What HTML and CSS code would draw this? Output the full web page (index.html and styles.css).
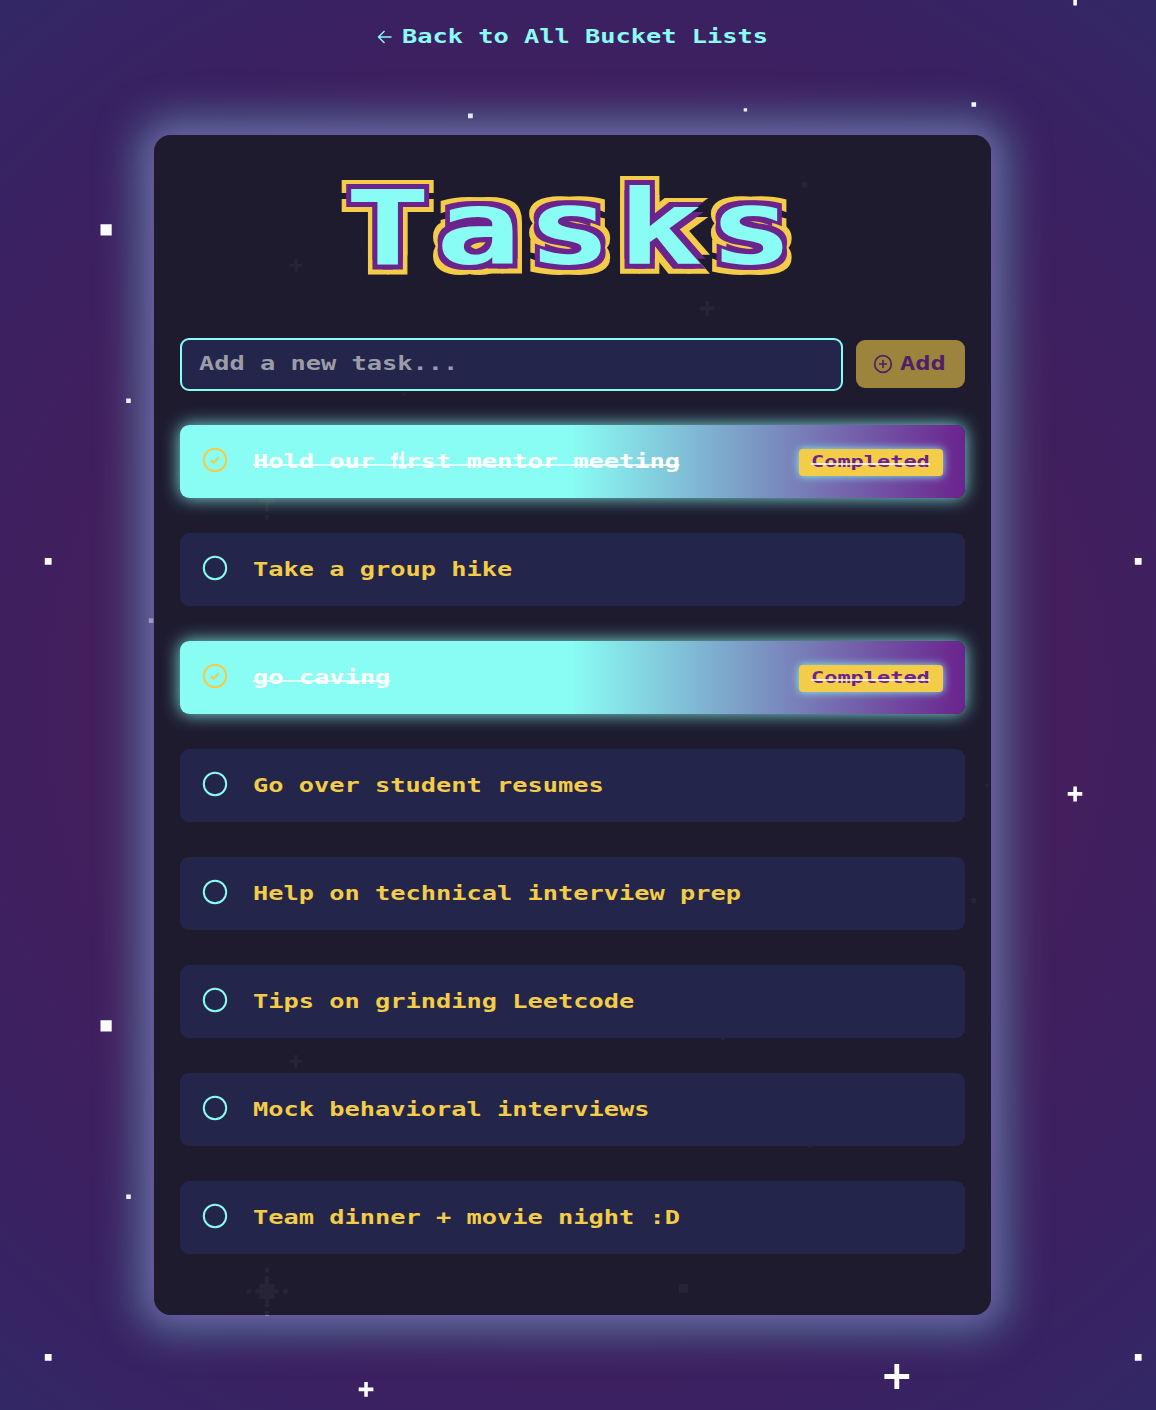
FILE: index.html
```html
<!DOCTYPE html>
<html lang="en">
<head>
<meta charset="utf-8">
<title>Tasks</title>
<link rel="stylesheet" href="styles.css">
</head>
<body>
<svg class="stars" width="1156" height="1410" aria-hidden="true">
  <defs>
    <pattern id="sky" width="1090" height="796" patternUnits="userSpaceOnUse">
      <path fill="#fff" d="M100.5 224.2h11.2v11.2h-11.2zM126.2 398.5h4.6v4.6h-4.6zM44.8 558h6.8v6.8h-6.8zM468 113.5h4.8v4.8H468zM743.7 108.2h3.4v3.4h-3.4zM971.5 102.2h4.6v4.6h-4.6zM801.7 182h5.4v5.4h-5.4zM402.5 392.8h3v3h-3zM985.5 784h3v3h-3zM721.5 241h3v3h-3zM808.5 349h3v3h-3zM679 488h8.7v8.7H679z"/>
      <path fill="#fff" fill-opacity=".65" d="M148.8 618.3h4.6v4.6h-4.6z"/>
      <path fill="#fff" d="M1073.3 786.5h3.6v5.6h5.4v3.6h-5.4v5.7h-3.6v-5.7h-5.6v-3.6h5.6zM1073.3-9.5h3.6v5.6h5.4v3.6h-5.4v5.7h-3.6v-5.7h-5.6v-3.6h5.6zM364.3 586h3.5v5.6h5.6v3.6h-5.6v5.6h-3.5v-5.6h-5.6v-3.6h5.6zM894.4 568h4.8v10h10v5h-10v10h-4.8v-10h-10v-5h10zM705.6 301h3.5v5.6h5.6v3.6h-5.6v5.6h-3.5v-5.6h-5.6v-3.6h5.6zM294.5 259h2.8v5h5v2.6h-5v5h-2.8v-5h-5V264h5z"/>
      <path fill="#fff" d="M259.5 488h15v15h-15zM265 480h4v31h-4zM255.500 493.500h23v4h-23zM265 472h4v4.500h-4zM265 515h4v4.500h-4zM247 493.500h4v4h-4zM283.500 493.500h4v4h-4z"/>
    </pattern>
  </defs>
  <rect width="1156" height="1410" fill="url(#sky)"/>
</svg>
<div class="page">
  <a class="back">
    <svg width="16" height="16" viewBox="0 0 16 16" fill="none" stroke="currentColor" stroke-width="1.4"><path d="M14.500 8H1.800M7.500 2L1.500 8l6 6"/></svg>
    <span class="wide">Back to All Bucket Lists</span>
  </a>
  <main class="card">
    <h1 class="title"><span>Tasks</span></h1>
    <form class="add-form">
      <div class="field"><input type="text" placeholder="Add a new task..."></div>
      <button type="button" class="add" disabled>
        <svg width="20" height="20" viewBox="0 0 20 20" fill="none" stroke="currentColor" stroke-width="1.7"><circle cx="10" cy="10" r="8.300"/><path d="M10 6v8M6 10h8"/></svg>
        <span class="wide">Add</span>
      </button>
    </form>
    <ul class="list">
      <li class="item done">
        <svg class="mark" viewBox="0 0 26 26"><circle cx="13" cy="13" r="11.200"/><path d="M9 13.200l2.700 2.600 5-5.300"/></svg>
        <span class="wide struck">Hold our <span class="fi">fi</span>rst mentor meeting</span><span class="badge"><span class="struck">Completed</span></span>
      </li>
      <li class="item"><svg class="mark" viewBox="0 0 26 26"><circle cx="13" cy="13" r="11.200"/></svg><span class="wide">Take a group hike</span></li>
      <li class="item done">
        <svg class="mark" viewBox="0 0 26 26"><circle cx="13" cy="13" r="11.200"/><path d="M9 13.200l2.700 2.600 5-5.300"/></svg>
        <span class="wide struck">go caving</span><span class="badge"><span class="struck">Completed</span></span>
      </li>
      <li class="item"><svg class="mark" viewBox="0 0 26 26"><circle cx="13" cy="13" r="11.200"/></svg><span class="wide">Go over student resumes</span></li>
      <li class="item"><svg class="mark" viewBox="0 0 26 26"><circle cx="13" cy="13" r="11.200"/></svg><span class="wide">Help on technical interview prep</span></li>
      <li class="item"><svg class="mark" viewBox="0 0 26 26"><circle cx="13" cy="13" r="11.200"/></svg><span class="wide">Tips on grinding Leetcode</span></li>
      <li class="item"><svg class="mark" viewBox="0 0 26 26"><circle cx="13" cy="13" r="11.200"/></svg><span class="wide">Mock behavioral interviews</span></li>
      <li class="item"><svg class="mark" viewBox="0 0 26 26"><circle cx="13" cy="13" r="11.200"/></svg><span class="wide">Team dinner + movie night :D</span></li>
    </ul>
  </main>
</div>
</body>
</html>
```
FILE: styles.css
```css
:root {
  --cyan: #89fcf3;
  --gold: #f3cc48;
  --purple: #6b238e;
}
* { box-sizing: border-box; }
body {
  margin: 0;
  height: 1410px;
  overflow: hidden;
  position: relative;
  background: radial-gradient(circle at 50% 50%, #431f5e 55%, #3a2162 80%, #332866 100%);
  font: bold 19px/24px "DejaVu Sans Mono", monospace;
}
.stars { position: absolute; top: 0; left: 0; }
.page { position: relative; padding: 24px 165px 0 154px; }
.wide {
  display: inline-block;
  white-space: pre;
  transform: scaleX(1.333);
  transform-origin: left center;
}
.back {
  display: flex;
  align-items: center;
  gap: 9px;
  width: 391px;
  height: 24px;
  margin: 0 0 87.300px 223px;
  color: var(--cyan);
}
.back svg { flex: none; position: relative; top: 1px; }
.card {
  height: 1179.500px;
  padding: 26px;
  border-radius: 17px;
  background: rgba(29, 27, 45, .96);
  box-shadow: 0 0 20px rgba(145, 60, 180, .55), 0 0 40px 16px rgba(110, 185, 205, .56);
}
.title {
  height: 154px;
  margin: 0 0 22.700px;
  padding-left: 164.500px;
  font-size: 103.500px;
  line-height: 134px;
  letter-spacing: 4px;
  color: var(--cyan);
}
.title span {
  display: inline-block;
  transform: scaleX(1.370);
  transform-origin: left center;
  text-shadow:
    -3.600px -5px var(--purple), 3.600px -5px var(--purple), -3.600px 5px var(--purple), 3.600px 5px var(--purple),
    -6.900px -9.500px var(--gold), 6.900px -9.500px var(--gold), -6.900px 9.500px var(--gold), 6.900px 9.500px var(--gold);
}
.add-form { display: flex; align-items: center; gap: 13px; margin-bottom: 33.900px; }
.field {
  width: 663px;
  height: 53px;
  padding-left: 17px;
  border: 2px solid var(--cyan);
  border-radius: 9px;
  background: #24254a;
  overflow: hidden;
}
.field input {
  width: 470px;
  height: 47px;
  padding: 0;
  border: 0;
  outline: 0;
  background: none;
  font: inherit;
  color: var(--gold);
  transform: scaleX(1.333);
  transform-origin: left center;
}
.field input::placeholder { color: #9a9da9; opacity: 1; }
.add {
  display: flex;
  align-items: center;
  gap: 7px;
  width: 109px;
  height: 48px;
  margin-top: -1px;
  padding: 0 0 1px 17px;
  border: 0;
  border-radius: 9px;
  background: #9c843d;
  color: #4e2068;
  font: inherit;
}
.add svg { flex: none; margin-top: 1px; }
.list { display: grid; gap: 35px; margin: 0; padding: 0; list-style: none; }
.item {
  display: flex;
  align-items: center;
  height: 73px;
  padding: 0 22px 1px;
  border-radius: 9px;
  background: #24254a;
  color: var(--gold);
}
.mark {
  flex: none;
  width: 26px;
  height: 26px;
  margin: -2px 25px 0 0;
  fill: none;
  stroke: var(--cyan);
  stroke-width: 2;
}
.item.done {
  padding-bottom: 0;
  background: linear-gradient(90deg, var(--cyan) 50%, var(--purple));
  box-shadow: 0 0 17px rgba(139, 253, 243, .9);
  color: #fff;
}
.done .mark { stroke: var(--gold); }
.struck { position: relative; }
.struck::after {
  content: "";
  position: absolute;
  left: 0;
  right: 0;
  bottom: 7px;
  height: 2px;
  background: rgba(255, 255, 255, .75);
}
.fi {
  display: inline-block;
  width: 1ch;
  transform: scaleX(.52);
  transform-origin: left center;
  -webkit-text-stroke: .8px #fff;
}
.badge {
  width: 144px;
  height: 27px;
  margin: 2px 0 0 auto;
  padding-left: 12px;
  border-radius: 4px;
  background: var(--gold);
  box-shadow: 0 0 9px var(--cyan);
  color: var(--purple);
  font-size: 16px;
  line-height: 26px;
}
.badge span {
  display: inline-block;
  transform: scaleX(1.370);
  transform-origin: left center;
}
.badge .struck::after { bottom: 10px; }
```
